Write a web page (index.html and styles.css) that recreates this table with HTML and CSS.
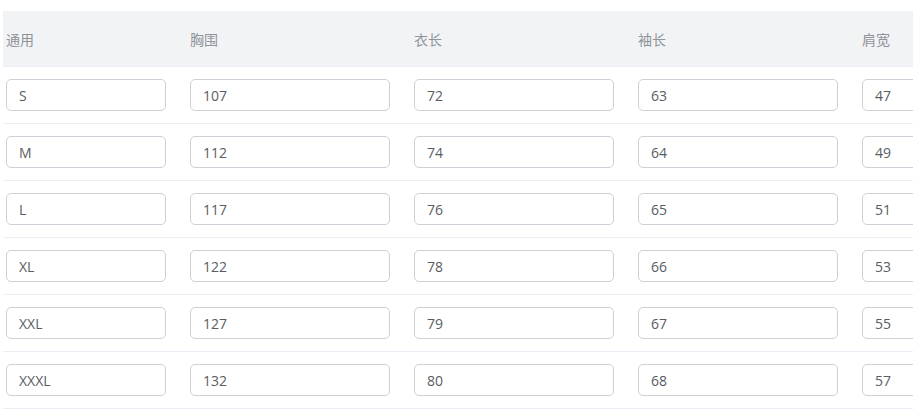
FILE: index.html
```html
<!DOCTYPE html>
<html lang="zh">
<head>
    <meta charset="UTF-8">
    <meta name="viewport" content="width=device-width, initial-scale=1.0">
    <title>尺码表</title>
    <link rel="stylesheet" href="styles.css">
</head>
<body>
    <!-- Size Table -->
    <div class="table-wrap">
        <table class="size-table">
            <thead>
                <tr>
                    <th class="col-first">通用</th>
                    <th>胸围</th>
                    <th>衣长</th>
                    <th>袖长</th>
                    <th>肩宽</th>
                </tr>
            </thead>
            <tbody>
                <tr>
                    <td class="col-first"><input class="cell-input small" value="S"></td>
                    <td><input class="cell-input" value="107"></td>
                    <td><input class="cell-input" value="72"></td>
                    <td><input class="cell-input" value="63"></td>
                    <td><input class="cell-input" value="47"></td>
                </tr>
                <tr>
                    <td class="col-first"><input class="cell-input small" value="M"></td>
                    <td><input class="cell-input" value="112"></td>
                    <td><input class="cell-input" value="74"></td>
                    <td><input class="cell-input" value="64"></td>
                    <td><input class="cell-input" value="49"></td>
                </tr>
                <tr>
                    <td class="col-first"><input class="cell-input small" value="L"></td>
                    <td><input class="cell-input" value="117"></td>
                    <td><input class="cell-input" value="76"></td>
                    <td><input class="cell-input" value="65"></td>
                    <td><input class="cell-input" value="51"></td>
                </tr>
                <tr>
                    <td class="col-first"><input class="cell-input small" value="XL"></td>
                    <td><input class="cell-input" value="122"></td>
                    <td><input class="cell-input" value="78"></td>
                    <td><input class="cell-input" value="66"></td>
                    <td><input class="cell-input" value="53"></td>
                </tr>
                <tr>
                    <td class="col-first"><input class="cell-input small" value="XXL"></td>
                    <td><input class="cell-input" value="127"></td>
                    <td><input class="cell-input" value="79"></td>
                    <td><input class="cell-input" value="67"></td>
                    <td><input class="cell-input" value="55"></td>
                </tr>
                <tr>
                    <td class="col-first"><input class="cell-input small" value="XXXL"></td>
                    <td><input class="cell-input" value="132"></td>
                    <td><input class="cell-input" value="80"></td>
                    <td><input class="cell-input" value="68"></td>
                    <td><input class="cell-input" value="57"></td>
                </tr>
            </tbody>
        </table>
    </div>
</body>
</html>
```

FILE: styles.css
```css
/* General Styles */
body {
    margin: 0;
    padding: 0;
    background: #fff;
    font-family: 'Open Sans', 'Noto Sans CJK SC', sans-serif;
    font-size: 14px;
    color: #606266;
}

/* Table Wrapper */
.table-wrap {
    width: 910px;
    margin: 11px 0 0 3px;
    overflow: hidden;
}

.size-table {
    border-collapse: collapse;
    table-layout: fixed;
    width: 1080px;
}

/* Header */
.size-table th {
    height: 55px;
    padding: 0 21px 0 3px;
    width: 200px;
    background-color: #f2f3f5;
    border-bottom: 1px solid #ebeef5;
    color: #909399;
    font-family: 'Noto Sans CJK SC', sans-serif;
    font-weight: normal;
    text-align: left;
    vertical-align: middle;
}

.size-table th.col-first {
    width: 160px;
}

/* Body Cells */
.size-table td {
    padding: 12px 21px 12px 3px;
    border-bottom: 1px solid #ebeef5;
}

/* Inputs */
.cell-input {
    display: block;
    box-sizing: border-box;
    width: 200px;
    height: 32px;
    padding: 0 12px;
    border: 1px solid #cdd0d6;
    border-radius: 5px;
    font-family: 'Open Sans', sans-serif;
    font-size: 14px;
    color: #5a5c61;
    background: #fff;
    outline: none;
}

.cell-input.small {
    width: 160px;
}
```
